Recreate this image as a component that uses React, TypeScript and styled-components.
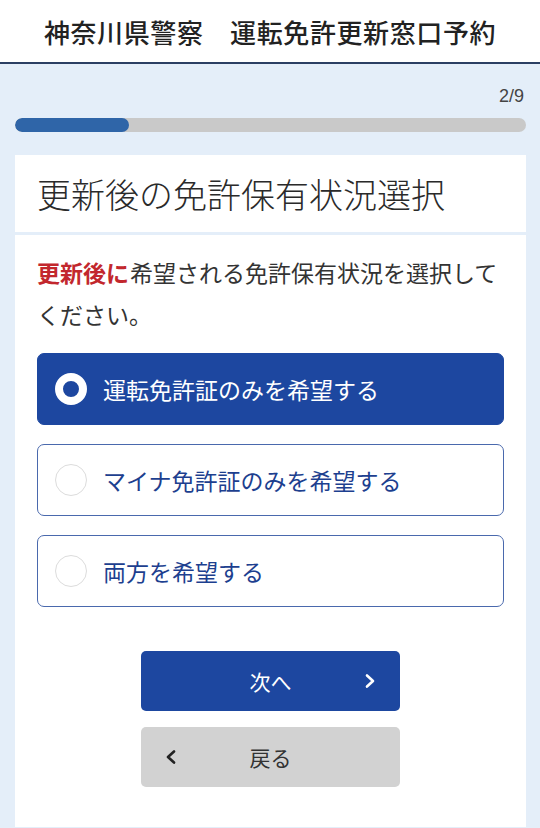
import styled, { createGlobalStyle } from 'styled-components'

const GlobalStyle = createGlobalStyle`
    html, body {
        margin: 0;
        padding: 0;
        background: #e4eef9;
    }
    body {
        font-family: 'Noto Sans CJK JP', 'Noto Sans', sans-serif;
        color: #333;
    }
`

const Page = styled.div`
    width: 540px;
    min-height: 828px;
    background: #e4eef9;
`
const Header = styled.header`
    height: 62px;
    background: #fff;
    border-bottom: 2px solid #2b3f63;
    display: flex;
    align-items: center;
    justify-content: center;
`
const SiteTitle = styled.h1`
    margin: 0;
    font-size: 26px;
    font-weight: 500;
    letter-spacing: 0.6px;
    color: #222;
    white-space: pre;
`
const Main = styled.main`
    padding: 0 14px 0 15px;
`
const StepCount = styled.div`
    text-align: right;
    font-family: 'Liberation Sans', sans-serif;
    font-size: 18px;
    color: #444;
    padding: 22px 2px 0 0;
    height: 36px;
    box-sizing: border-box;
`
const ProgressTrack = styled.div`
    height: 14px;
    margin-top: 18px;
    border-radius: 7px;
    background: #c9c9c9;
    overflow: hidden;
`
const ProgressFill = styled.div`
    height: 100%;
    border-radius: 7px;
    background: #2f65a8;
`
const Card = styled.section`
    margin-top: 23px;
    display: flex;
    flex-direction: column;
    gap: 3px;
`
const CardHead = styled.div`
    background: #fff;
    height: 77px;
    display: flex;
    align-items: center;
    padding-left: 22px;
`
const CardTitle = styled.h2`
    margin: 0;
    font-size: 34px;
    font-weight: 300;
    color: #2a2a2a;
`
const CardBody = styled.div`
    background: #fff;
    padding: 16px 22px 40px;
`
const Lead = styled.p`
    margin: 0 0 18px;
    font-size: 23px;
    line-height: 42px;
    color: #333;
`
const Em = styled.strong`
    color: #c2272d;
    font-weight: 700;
    margin-right: 1px;
`
const Options = styled.div`
    display: flex;
    flex-direction: column;
    gap: 19px;
`
const Option = styled.label<{ $checked?: boolean }>`
    height: 72px;
    box-sizing: border-box;
    border-radius: 7px;
    display: flex;
    align-items: center;
    gap: 16px;
    padding-left: 17px;
    font-size: 23px;
    cursor: pointer;
    background: ${p => (p.$checked ? '#1d47a0' : '#fff')};
    color: ${p => (p.$checked ? '#fff' : '#1d3f8f')};
    border: 1px solid ${p => (p.$checked ? '#1d47a0' : '#4a69ad')};
`
const Radio = styled.span<{ $checked?: boolean }>`
    width: 32px;
    height: 32px;
    box-sizing: border-box;
    border-radius: 50%;
    flex-shrink: 0;
    background: ${p => (p.$checked ? '#1d47a0' : '#fff')};
    border: ${p => (p.$checked ? '8px solid #fff' : '1.5px solid #dcdcdc')};
`
const Actions = styled.div`
    margin-top: 44px;
    display: flex;
    flex-direction: column;
    align-items: center;
    gap: 16px;
`
const Button = styled.button<{ $primary?: boolean }>`
    width: 259px;
    height: 60px;
    border: none;
    border-radius: 5px;
    display: grid;
    grid-template-columns: 40px 1fr 40px;
    align-items: center;
    padding: 0 10px;
    font-family: inherit;
    font-size: 21px;
    background: ${p => (p.$primary ? '#1d47a0' : '#d2d2d2')};
    color: ${p => (p.$primary ? '#fff' : '#333')};
    cursor: pointer;
`
const Label = styled.span`
    grid-column: 2;
    grid-row: 1;
    text-align: center;
`
const Chevron = styled.svg<{ $left?: boolean }>`
    width: 16px;
    height: 16px;
    justify-self: center;
    grid-row: 1;
    grid-column: ${p => (p.$left ? 1 : 3)};
`

const options = ['運転免許証のみを希望する', 'マイナ免許証のみを希望する', '両方を希望する']

export default function App() {
    const selected = 0
    const step = 2
    const total = 9
    return (
        <Page>
            <GlobalStyle />
            <Header>
                <SiteTitle>神奈川県警察　運転免許更新窓口予約</SiteTitle>
            </Header>
            <Main>
                <StepCount>{step}/{total}</StepCount>
                <ProgressTrack>
                    <ProgressFill style={{ width: `${(step / total) * 100}%` }} />
                </ProgressTrack>
                <Card>
                    <CardHead>
                        <CardTitle>更新後の免許保有状況選択</CardTitle>
                    </CardHead>
                    <CardBody>
                        <Lead>
                            <Em>更新後に</Em>
                            <span>希望される免許保有状況を選択してください。</span>
                        </Lead>
                        <Options>
                            {options.map((o, i) => (
                                <Option key={o} $checked={i === selected}>
                                    <Radio $checked={i === selected} />
                                    {o}
                                </Option>
                            ))}
                        </Options>
                        <Actions>
                            <Button $primary>
                                <Label>次へ</Label>
                                <Chevron viewBox="0 0 16 16">
                                    <path d="M5 2.5 L11 8 L5 13.5" fill="none" stroke="#fff" strokeWidth="2.6" strokeLinecap="round" strokeLinejoin="round" />
                                </Chevron>
                            </Button>
                            <Button>
                                <Chevron $left viewBox="0 0 16 16">
                                    <path d="M11 2.5 L5 8 L11 13.5" fill="none" stroke="#222" strokeWidth="2.6" strokeLinecap="round" strokeLinejoin="round" />
                                </Chevron>
                                <Label>戻る</Label>
                            </Button>
                        </Actions>
                    </CardBody>
                </Card>
            </Main>
        </Page>
    )
}
